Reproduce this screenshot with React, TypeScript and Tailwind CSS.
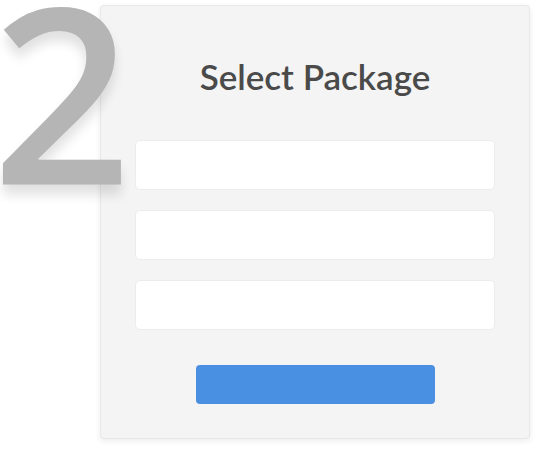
import React from 'react';

const App: React.FC = () => {
  return (
    <div className="relative w-[538px] h-[449px] bg-white overflow-hidden" style={{ fontFamily: 'Lato, "Open Sans", sans-serif' }}>
      {/* step card */}
      <div className="ml-[100px] mt-[5px] w-[430px] h-[434px] flex flex-col items-center bg-[#f4f4f4] border border-[#e8e8e8] rounded-[4px] shadow-[0_2px_6px_rgba(0,0,0,0.08)]">
        <h2 className="mt-[53px] text-[35px] leading-none font-semibold text-[#4a4a4a]">Select Package</h2>
        <div className="mt-[46px] flex flex-col gap-[20px]">
          <div className="w-[360px] h-[50px] bg-white border border-[#ececec] rounded-[5px]" />
          <div className="w-[360px] h-[50px] bg-white border border-[#ececec] rounded-[5px]" />
          <div className="w-[360px] h-[50px] bg-white border border-[#ececec] rounded-[5px]" />
        </div>
        <button className="mt-[35px] w-[239px] h-[39px] bg-[#4a90e2] rounded-[4px]" />
      </div>

      {/* big step number over the card edge */}
      <div
        className="absolute left-[-8px] top-[-32px] text-[244px] leading-none font-semibold text-[#b5b5b5] [text-shadow:0_10px_12px_rgba(0,0,0,0.12)] select-none"
        style={{ fontFamily: '"Open Sans", sans-serif' }}
      >
        2
      </div>
    </div>
  );
};

export default App;
